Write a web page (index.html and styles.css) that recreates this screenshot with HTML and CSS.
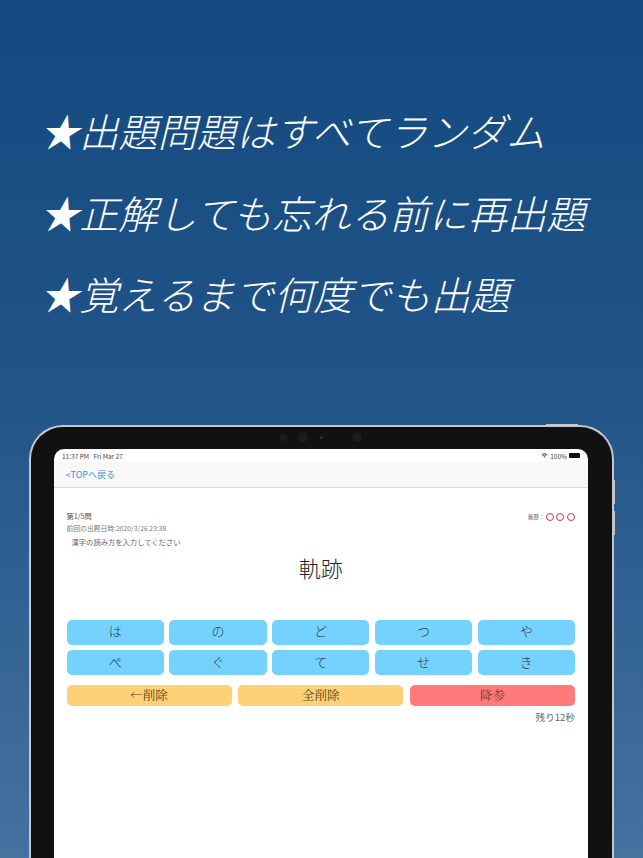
FILE: index.html
```html
<!DOCTYPE html>
<html lang="ja">
<head>
<meta charset="utf-8">
<title>漢字クイズ</title>
<link rel="stylesheet" href="styles.css">
</head>
<body>
<main class="page">
  <section class="hero">
    <p class="line">★出題問題はすべてランダム</p>
    <p class="line">★正解しても忘れる前に再出題</p>
    <p class="line">★覚えるまで何度でも出題</p>
  </section>
  <section class="device">
    <span class="hw hw-top"></span>
    <span class="hw hw-side1"></span>
    <span class="hw hw-side2"></span>
    <span class="cam cam1"></span>
    <span class="cam cam2"></span>
    <span class="cam cam3"></span>
    <span class="cam cam4"></span>
    <div class="screen">
      <div class="status">
        <span>11:37 PM&nbsp;&nbsp; Fri Mar 27</span>
        <span class="status-right">
          <svg class="wifi" viewBox="0 0 12 9"><path d="M0.8 3.2a7.4 7.4 0 0 1 10.4 0M2.7 5.1a4.7 4.7 0 0 1 6.6 0" fill="none" stroke="#222" stroke-width="1.4"/><path d="M4.3 6.8a2.4 2.4 0 0 1 3.4 0L6 8.6z" fill="#222"/></svg>
          100%
          <span class="battery"></span>
        </span>
      </div>
      <nav class="navbar"><span class="back">&lt;TOPへ戻る</span></nav>
      <div class="content">
        <div class="meta">
          <div>
            <p class="count">第1/5問</p>
            <p class="last">前回の出題日時:2020/3/26 23:38</p>
          </div>
          <div class="history"><span class="history-label">履歴：</span><i class="ring"></i><i class="ring"></i><i class="ring"></i></div>
        </div>
        <p class="prompt">漢字の読み方を入力してください</p>
        <h1 class="kanji">軌跡</h1>
        <div class="keys">
          <button class="key">は</button><button class="key">の</button><button class="key">ど</button><button class="key">つ</button><button class="key">や</button>
          <button class="key">ぺ</button><button class="key">ぐ</button><button class="key">て</button><button class="key">せ</button><button class="key">き</button>
        </div>
        <div class="actions">
          <button class="act act-del">←削除</button>
          <button class="act act-del">全削除</button>
          <button class="act act-give">降参</button>
        </div>
        <p class="timer">残り12秒</p>
      </div>
    </div>
  </section>
</main>
</body>
</html>
```
FILE: styles.css
```css
* { box-sizing: border-box; }
html, body { margin: 0; padding: 0; }
body {
  width: 643px;
  height: 858px;
  overflow: hidden;
  font-family: "Noto Sans CJK JP", "Noto Sans", sans-serif;
}
.page {
  width: 643px;
  height: 858px;
  overflow: hidden;
  background: linear-gradient(180deg, #134a80 0%, #215488 45%, #45729f 100%);
}
.hero {
  height: 425px;
  padding: 90px 0 0 40px;
}
.line {
  margin: 0;
  height: 81.5px;
  line-height: 81.5px;
  font-size: 39.2px;
  font-style: italic;
  font-weight: 300;
  color: #fff;
  white-space: nowrap;
}
.device {
  position: relative;
  width: 585px;
  height: 460px;
  margin-left: 29px;
  padding: 22px 24px 0 22.5px;
  background: #111;
  border: 2px solid #c3c7cc;
  border-bottom: 0;
  border-radius: 34px 34px 0 0;
}
.hw {
  position: absolute;
  background: #c3c7cc;
}
.hw-top { top: -3px; right: 34px; width: 32px; height: 2px; }
.hw-side1 { top: 53px; right: -3px; width: 2px; height: 24px; }
.hw-side2 { top: 84px; right: -3px; width: 2px; height: 24px; }
.cam {
  position: absolute;
  border-radius: 50%;
  background: #1c1c1e;
}
.cam1 { top: 7px; left: 248.5px; width: 7px; height: 7px; }
.cam2 { top: 5px; left: 266.5px; width: 10px; height: 10px; }
.cam3 { top: 9px; left: 288.5px; width: 3px; height: 3px; background: #24364c; }
.cam4 { top: 5px; left: 321px; width: 10px; height: 10px; }
.screen {
  height: 100%;
  background: #fff;
  border-radius: 10px 10px 0 0;
  overflow: hidden;
}
.status {
  display: flex;
  justify-content: space-between;
  align-items: center;
  height: 13px;
  padding: 0 8px 0 8.5px;
  font-size: 6.5px;
  color: #444;
}
.status-right { display: flex; align-items: center; gap: 2px; }
.wifi { width: 7px; height: 5px; }
.battery {
  width: 11px;
  height: 5px;
  background: #111;
  border-radius: 1px;
}
.navbar {
  height: 26px;
  display: flex;
  align-items: center;
  padding-left: 12px;
  background: #f8f8f8;
  border-bottom: 1px solid #dcdcdc;
}
.back { font-size: 9px; color: #3d92e6; }
.content { padding: 23px 13px 0; }
.meta {
  display: flex;
  justify-content: space-between;
  align-items: flex-start;
}
.count { margin: 0; height: 11px; line-height: 11px; font-size: 7.2px; color: #555; }
.last { margin: 0; height: 11px; line-height: 11px; font-size: 6.8px; color: #777; padding-top: 1px; }
.history { display: flex; align-items: center; height: 11px; gap: 2.7px; }
.history-label { font-size: 5.5px; color: #666; margin-right: -1.5px; }
.ring {
  width: 8px;
  height: 8px;
  border: 1.4px solid #d0353f;
  border-radius: 50%;
}
.prompt {
  margin: 4px 0 0 5px;
  height: 11px;
  line-height: 11px;
  font-size: 7.3px;
  color: #666;
}
.kanji {
  margin: 2px 0 0;
  height: 34px;
  line-height: 34px;
  text-align: center;
  font-size: 22px;
  font-weight: 300;
  color: #222;
}
.keys {
  display: grid;
  grid-template-columns: repeat(5, 1fr);
  gap: 5.5px;
  margin-top: 35.5px;
}
.key {
  height: 25px;
  padding: 0 0 3px;
  border: 0;
  border-radius: 5px;
  background: #75d2ff;
  font-family: inherit;
  font-size: 13px;
  font-weight: 300;
  color: #2b3b46;
}
.actions {
  display: grid;
  grid-template-columns: repeat(3, 1fr);
  gap: 6.5px;
  margin-top: 10px;
}
.act {
  height: 21px;
  padding: 0 0 2px;
  border: 0;
  border-radius: 5px;
  font-family: "Noto Serif CJK JP", "Liberation Serif", serif;
  font-size: 12.5px;
}
.act-del { background: #ffd176; color: #574722; }
.act-give { background: #ff7b7b; color: #6e3535; }
.timer {
  margin: 5px 0 0;
  height: 13px;
  line-height: 13px;
  text-align: right;
  font-size: 9.6px;
  color: #666;
}
```
